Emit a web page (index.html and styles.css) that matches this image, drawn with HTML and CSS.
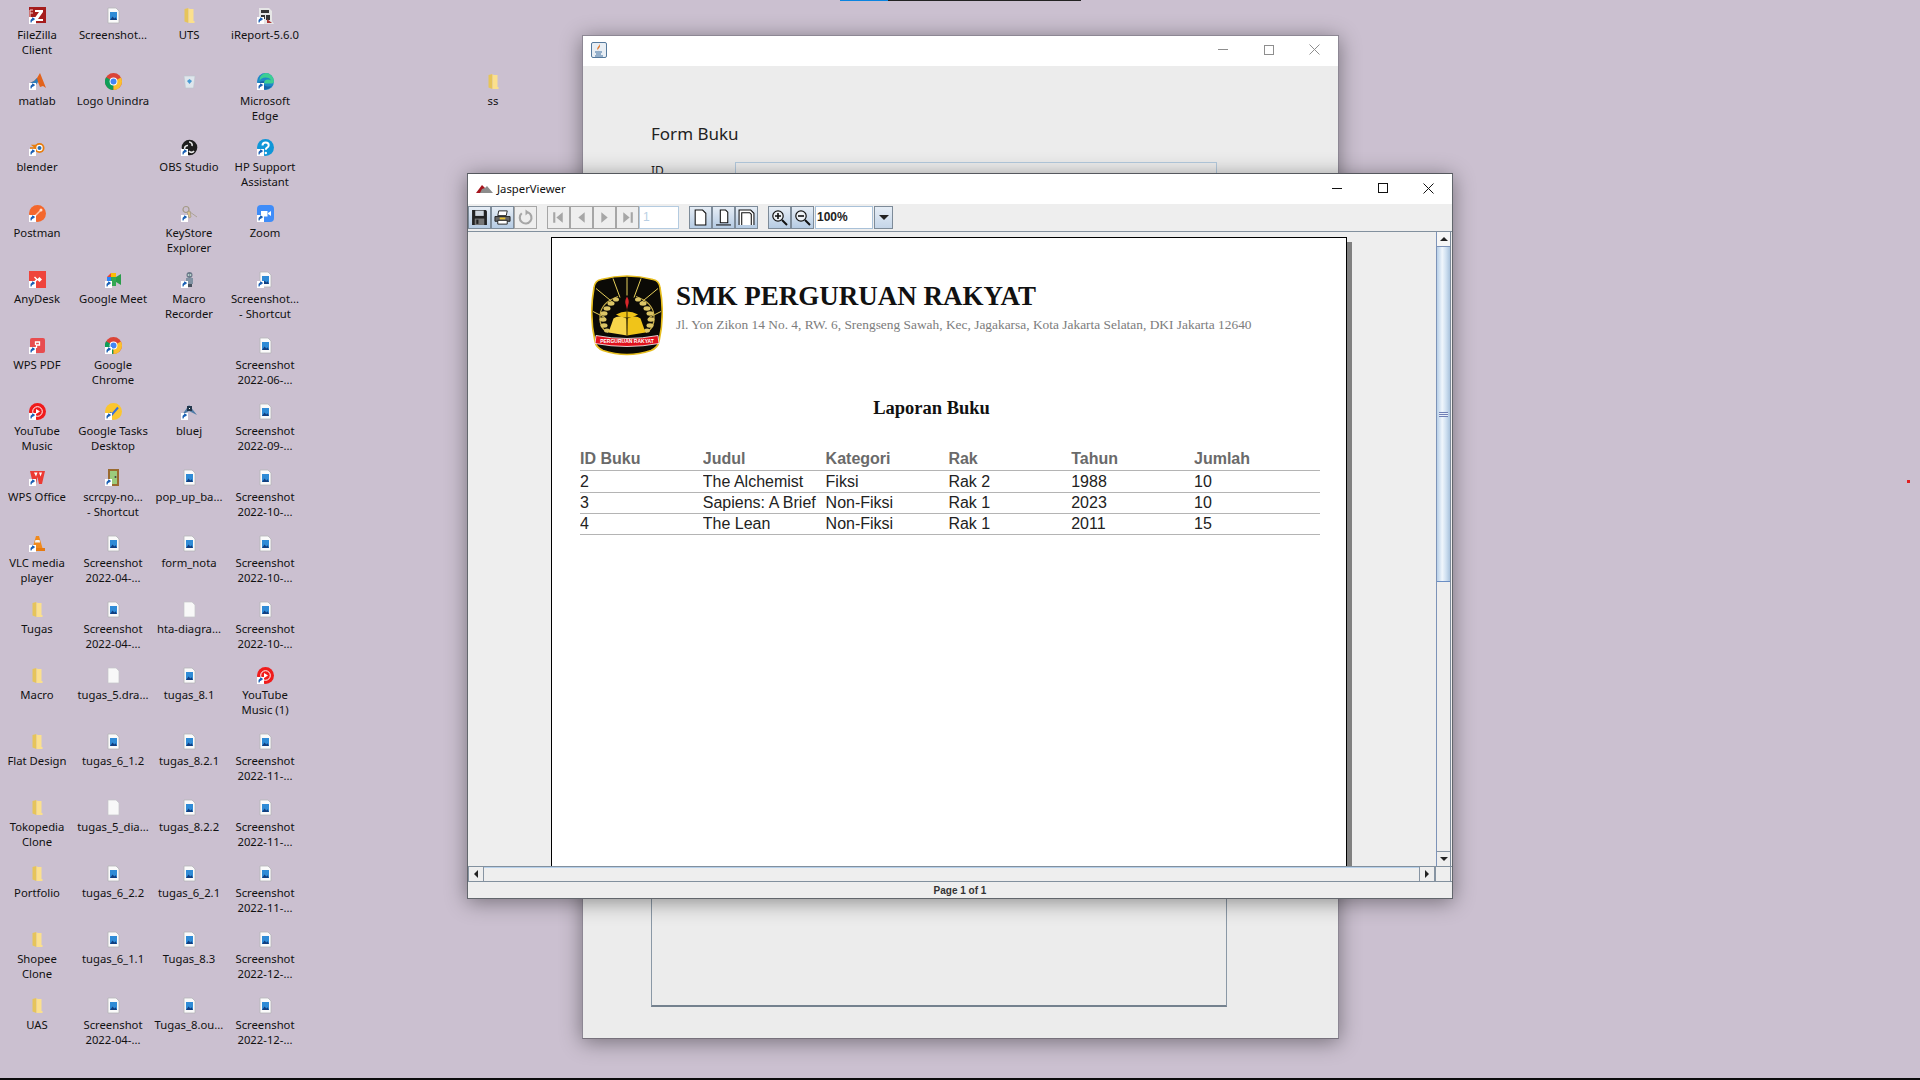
FILE: index.html
```html
<!DOCTYPE html>
<html lang="id">
<head>
<meta charset="utf-8">
<title>JasperViewer</title>
<link rel="stylesheet" href="styles.css">
</head>
<body>
<svg class="defs" width="0" height="0" aria-hidden="true">
  <defs>
    <symbol id="sc" viewBox="0 0 17 17"><rect x="0" y="10" width="7" height="7" fill="#fff"/><path d="M2 15.5v-2.2q0-1.2 1.3-1.2h1.2M3.6 10.8l1.9 1.3-1.9 1.3z" fill="#1a5fb4" stroke="#1a5fb4" stroke-width="1"/></symbol>
    <symbol id="doc" viewBox="0 0 17 17"><path d="M3 1h8l3 3v12H3z" fill="#fafafa" stroke="#b5b5b8" stroke-width=".8"/><rect x="5" y="5" width="7" height="8" fill="#2f8bd6"/><path d="M5 13l2.6-3.6 1.7 2 1.3-1.2L12 13z" fill="#123f80"/></symbol>
    <symbol id="blank" viewBox="0 0 17 17"><path d="M3 1h8l3 3v12H3z" fill="#f8f8f8" stroke="#c4c4c8" stroke-width=".7"/></symbol>
    <symbol id="folder" viewBox="0 0 17 17"><path d="M3.5 2l4-1v15l-4-1.5z" fill="#e6c45a"/><path d="M7.5 1l1 1h4v12h1v2h-6z" fill="#fbe08d"/></symbol>
    <symbol id="fz" viewBox="0 0 17 17"><rect width="17" height="16" fill="#a51c1c"/><path d="M6 3h8v2l-5 7h5v2H5v-2l5-7H6z" fill="#fff"/><path d="M1 3h3M1 6h3M1 3v8" stroke="#f6d0d0" fill="none"/></symbol>
    <symbol id="irep" viewBox="0 0 17 17"><path d="M2 1h10l3 3v10l2 3H2z" fill="#e6e6e6"/><path d="M4 3h8v3H4zM4 8h4v4H4zM9 8h4v5H9z" fill="#333"/><path d="M10 12l5 4h-5z" fill="#a33"/></symbol>
    <symbol id="matlab" viewBox="0 0 17 17"><path d="M1 10l4-2 3-3 3-5 6 15-3-2-3 1-2-5z" fill="#e2621b"/><path d="M1 10l4-2 3-3 1 4-3 4z" fill="#2e7dbc"/></symbol>
    <symbol id="chrome" viewBox="0 0 17 17"><circle cx="8.5" cy="8.5" r="8.5" fill="#db4437"/><path d="M8.5 8.5L1.1 4.2A8.5 8.5 0 0 0 8.5 17z" fill="#0f9d58"/><path d="M8.5 8.5V17A8.5 8.5 0 0 0 16 4.5z" fill="#fbc02d"/><circle cx="8.5" cy="8.5" r="3.9" fill="#fff"/><circle cx="8.5" cy="8.5" r="3" fill="#4285f4"/></symbol>
    <symbol id="bin" viewBox="0 0 17 17"><path d="M3 3h11l-1.5 12h-8z" fill="#dfe6ec" stroke="#bcc6cf" stroke-width=".6"/><path d="M6 8l2.500-2 2.500 2-2.500 3z" fill="#4a9bd4"/></symbol>
    <symbol id="edge" viewBox="0 0 17 17"><circle cx="8.500" cy="8.500" r="8.500" fill="#1e88c7"/><path d="M8.500 0A8.500 8.500 0 0 1 17 8.500q0 2-3.500 2H7q0-4 4-4 2 0 3 1-1-3-5.500-3Q4 4.500 2.500 8 2 2 8.500 0z" fill="#3ccf92"/><path d="M7 10.500q0 3.500 5 3 2 0 3-1A8.500 8.500 0 0 1 5 16q-3-2-3-6 1-2 5-2z" fill="#1565a8"/></symbol>
    <symbol id="blender" viewBox="0 0 17 17"><path d="M1 9h6L4 6.500h5L11 4.500" fill="none" stroke="#e87d0d" stroke-width="1.600"/><circle cx="10.500" cy="9" r="5" fill="#e87d0d"/><circle cx="10.500" cy="9" r="3.200" fill="#fff"/><circle cx="10.500" cy="9" r="2" fill="#2a6fb0"/></symbol>
    <symbol id="obs" viewBox="0 0 17 17"><circle cx="8.500" cy="8.500" r="7.800" fill="#1e1e1e"/><path d="M8 3a3 3 0 0 1 3 4M4 11a3 3 0 0 1 3-4.500M13 12a3 3 0 0 1-5 0" stroke="#e8e8e8" stroke-width="1.600" fill="none"/></symbol>
    <symbol id="hp" viewBox="0 0 17 17"><circle cx="8.500" cy="8.500" r="8.500" fill="#0f96d8"/><path d="M5.500 6.500q0-3 3.200-3 3 0 3 2.700 0 1.500-1.600 2.500-1.300.8-1.300 2" fill="none" stroke="#fff" stroke-width="2"/><circle cx="8.800" cy="14" r="1.200" fill="#fff"/></symbol>
    <symbol id="postman" viewBox="0 0 17 17"><circle cx="8.500" cy="8.500" r="8.500" fill="#f4672c"/><path d="M5 12l7-7" stroke="#ffc9ad" stroke-width="1.400"/><circle cx="12" cy="5" r="1.500" fill="#ffe0d0"/></symbol>
    <symbol id="keys" viewBox="0 0 17 17"><circle cx="5" cy="4.500" r="3" fill="none" stroke="#a49a86" stroke-width="1.200"/><path d="M6 7l2 6 2-1-1-6zM9 7l7 5" fill="#dcc38c" stroke="#a49a86" stroke-width=".8"/></symbol>
    <symbol id="zoom" viewBox="0 0 17 17"><rect width="17" height="17" rx="4" fill="#3f8cf8"/><path d="M4 6h6.500v5.500H4zM11 8l3-2v5l-3-2z" fill="#fff"/></symbol>
    <symbol id="anydesk" viewBox="0 0 17 17"><rect width="17" height="17" fill="#ef443b"/><path d="M6 5.500L9 8.500 6 11.500 5 10.500 7 8.500 5 6.500zM10.500 6l2.500 2.500-2.500 2.500L8 8.500z" fill="#fff"/></symbol>
    <symbol id="meet" viewBox="0 0 17 17"><path d="M2 6l4-4v4z" fill="#ea4335"/><path d="M6 2h5v4H6z" fill="#fbbc04"/><path d="M2 6h4v5H2z" fill="#2684fc"/><path d="M2 11h4v4H3.500L2 13.500z" fill="#0066da"/><path d="M6 6h5v9H6z" fill="#34a853"/><path d="M11 6l5-3v11l-5-3z" fill="#2a9d4a"/></symbol>
    <symbol id="macro" viewBox="0 0 17 17"><circle cx="8.500" cy="4" r="3" fill="#6c7a8a"/><rect x="5" y="7" width="7" height="6" fill="#8192a3"/><rect x="6" y="13" width="5" height="3" fill="#47525e"/><circle cx="7.500" cy="4" r=".8" fill="#dfe"/><circle cx="9.500" cy="4" r=".8" fill="#dfe"/></symbol>
    <symbol id="wpspdf" viewBox="0 0 17 17"><rect x="1" y="1" width="15" height="15" rx="2" fill="#e84c4f"/><path d="M6.500 8V5h4v3h-3v3" fill="none" stroke="#fff" stroke-width="1.300"/></symbol>
    <symbol id="ytm" viewBox="0 0 17 17"><circle cx="8.500" cy="8.500" r="8.500" fill="#f01b1b"/><circle cx="8.500" cy="8.500" r="4.800" fill="none" stroke="#fff" stroke-width="1"/><path d="M7 6l4 2.500-4 2.500z" fill="#fff"/></symbol>
    <symbol id="tasks" viewBox="0 0 17 17"><circle cx="8.500" cy="8.500" r="8.500" fill="#fbc62e"/><path d="M5 9.500l2 2 6-7" fill="none" stroke="#3a6fd8" stroke-width="2"/></symbol>
    <symbol id="bluej" viewBox="0 0 17 17"><path d="M1 12l7-10 8 10-8-4z" fill="#4e7aa5"/><path d="M6 3h5v5H6z" fill="#24384c"/><path d="M8 5l1 1" stroke="#fff"/></symbol>
    <symbol id="wps" viewBox="0 0 17 17"><path d="M1 2h15l-3 13h-3L8.500 8 7 15H4z" fill="#ec3a33"/><path d="M5 3.500l2 4 1.500-4zM10 3.500l1.500 4 1.500-4z" fill="#fff"/></symbol>
    <symbol id="scrcpy" viewBox="0 0 17 17"><rect x="3" y="0" width="11" height="17" fill="#9a6a2e"/><rect x="5" y="2" width="7" height="13" fill="#9ccb7c"/><circle cx="10.500" cy="8" r="1" fill="#444"/></symbol>
    <symbol id="vlc" viewBox="0 0 17 17"><path d="M7 1h3l3.500 12h-10z" fill="#f08a1d"/><path d="M6.500 5h4l.6 2.500H5.800z" fill="#f4f4f4"/><rect x="1" y="13" width="15" height="3" fill="#e67a10"/></symbol>
  </defs>
</svg>

<div class="topbar"><span class="topbar-blue"></span></div>
<span class="red-dot"></span>

<main class="desktop">
  <div class="it"><svg class="ic" viewBox="0 0 17 17"><use href="#fz"/><use href="#sc"/></svg><span>FileZilla<br>Client</span></div>
  <div class="it"><svg class="ic" viewBox="0 0 17 17"><use href="#matlab"/><use href="#sc"/></svg><span>matlab</span></div>
  <div class="it"><svg class="ic" viewBox="0 0 17 17"><use href="#blender"/><use href="#sc"/></svg><span>blender</span></div>
  <div class="it"><svg class="ic" viewBox="0 0 17 17"><use href="#postman"/><use href="#sc"/></svg><span>Postman</span></div>
  <div class="it"><svg class="ic" viewBox="0 0 17 17"><use href="#anydesk"/><use href="#sc"/></svg><span>AnyDesk</span></div>
  <div class="it"><svg class="ic" viewBox="0 0 17 17"><use href="#wpspdf"/><use href="#sc"/></svg><span>WPS PDF</span></div>
  <div class="it"><svg class="ic" viewBox="0 0 17 17"><use href="#ytm"/><use href="#sc"/></svg><span>YouTube<br>Music</span></div>
  <div class="it"><svg class="ic" viewBox="0 0 17 17"><use href="#wps"/><use href="#sc"/></svg><span>WPS Office</span></div>
  <div class="it"><svg class="ic" viewBox="0 0 17 17"><use href="#vlc"/><use href="#sc"/></svg><span>VLC media<br>player</span></div>
  <div class="it"><svg class="ic" viewBox="0 0 17 17"><use href="#folder"/></svg><span>Tugas</span></div>
  <div class="it"><svg class="ic" viewBox="0 0 17 17"><use href="#folder"/></svg><span>Macro</span></div>
  <div class="it"><svg class="ic" viewBox="0 0 17 17"><use href="#folder"/></svg><span>Flat Design</span></div>
  <div class="it"><svg class="ic" viewBox="0 0 17 17"><use href="#folder"/></svg><span>Tokopedia<br>Clone</span></div>
  <div class="it"><svg class="ic" viewBox="0 0 17 17"><use href="#folder"/></svg><span>Portfolio</span></div>
  <div class="it"><svg class="ic" viewBox="0 0 17 17"><use href="#folder"/></svg><span>Shopee<br>Clone</span></div>
  <div class="it"><svg class="ic" viewBox="0 0 17 17"><use href="#folder"/></svg><span>UAS</span></div>

  <div class="it"><svg class="ic" viewBox="0 0 17 17"><use href="#doc"/></svg><span>Screenshot...</span></div>
  <div class="it"><svg class="ic" viewBox="0 0 17 17"><use href="#chrome"/></svg><span>Logo Unindra</span></div>
  <div class="it"></div>
  <div class="it"></div>
  <div class="it"><svg class="ic" viewBox="0 0 17 17"><use href="#meet"/><use href="#sc"/></svg><span>Google Meet</span></div>
  <div class="it"><svg class="ic" viewBox="0 0 17 17"><use href="#chrome"/><use href="#sc"/></svg><span>Google<br>Chrome</span></div>
  <div class="it"><svg class="ic" viewBox="0 0 17 17"><use href="#tasks"/><use href="#sc"/></svg><span>Google Tasks<br>Desktop</span></div>
  <div class="it"><svg class="ic" viewBox="0 0 17 17"><use href="#scrcpy"/><use href="#sc"/></svg><span>scrcpy-no...<br>- Shortcut</span></div>
  <div class="it"><svg class="ic" viewBox="0 0 17 17"><use href="#doc"/></svg><span>Screenshot<br>2022-04-...</span></div>
  <div class="it"><svg class="ic" viewBox="0 0 17 17"><use href="#doc"/></svg><span>Screenshot<br>2022-04-...</span></div>
  <div class="it"><svg class="ic" viewBox="0 0 17 17"><use href="#blank"/></svg><span>tugas_5.dra...</span></div>
  <div class="it"><svg class="ic" viewBox="0 0 17 17"><use href="#doc"/></svg><span>tugas_6_1.2</span></div>
  <div class="it"><svg class="ic" viewBox="0 0 17 17"><use href="#blank"/></svg><span>tugas_5_dia...</span></div>
  <div class="it"><svg class="ic" viewBox="0 0 17 17"><use href="#doc"/></svg><span>tugas_6_2.2</span></div>
  <div class="it"><svg class="ic" viewBox="0 0 17 17"><use href="#doc"/></svg><span>tugas_6_1.1</span></div>
  <div class="it"><svg class="ic" viewBox="0 0 17 17"><use href="#doc"/></svg><span>Screenshot<br>2022-04-...</span></div>

  <div class="it"><svg class="ic" viewBox="0 0 17 17"><use href="#folder"/></svg><span>UTS</span></div>
  <div class="it"><svg class="ic" viewBox="0 0 17 17"><use href="#bin"/></svg></div>
  <div class="it"><svg class="ic" viewBox="0 0 17 17"><use href="#obs"/><use href="#sc"/></svg><span>OBS Studio</span></div>
  <div class="it"><svg class="ic" viewBox="0 0 17 17"><use href="#keys"/><use href="#sc"/></svg><span>KeyStore<br>Explorer</span></div>
  <div class="it"><svg class="ic" viewBox="0 0 17 17"><use href="#macro"/><use href="#sc"/></svg><span>Macro<br>Recorder</span></div>
  <div class="it"></div>
  <div class="it"><svg class="ic" viewBox="0 0 17 17"><use href="#bluej"/><use href="#sc"/></svg><span>bluej</span></div>
  <div class="it"><svg class="ic" viewBox="0 0 17 17"><use href="#doc"/></svg><span>pop_up_ba...</span></div>
  <div class="it"><svg class="ic" viewBox="0 0 17 17"><use href="#doc"/></svg><span>form_nota</span></div>
  <div class="it"><svg class="ic" viewBox="0 0 17 17"><use href="#blank"/></svg><span>hta-diagra...</span></div>
  <div class="it"><svg class="ic" viewBox="0 0 17 17"><use href="#doc"/></svg><span>tugas_8.1</span></div>
  <div class="it"><svg class="ic" viewBox="0 0 17 17"><use href="#doc"/></svg><span>tugas_8.2.1</span></div>
  <div class="it"><svg class="ic" viewBox="0 0 17 17"><use href="#doc"/></svg><span>tugas_8.2.2</span></div>
  <div class="it"><svg class="ic" viewBox="0 0 17 17"><use href="#doc"/></svg><span>tugas_6_2.1</span></div>
  <div class="it"><svg class="ic" viewBox="0 0 17 17"><use href="#doc"/></svg><span>Tugas_8.3</span></div>
  <div class="it"><svg class="ic" viewBox="0 0 17 17"><use href="#doc"/></svg><span>Tugas_8.ou...</span></div>

  <div class="it"><svg class="ic" viewBox="0 0 17 17"><use href="#irep"/><use href="#sc"/></svg><span>iReport-5.6.0</span></div>
  <div class="it"><svg class="ic" viewBox="0 0 17 17"><use href="#edge"/><use href="#sc"/></svg><span>Microsoft<br>Edge</span></div>
  <div class="it"><svg class="ic" viewBox="0 0 17 17"><use href="#hp"/><use href="#sc"/></svg><span>HP Support<br>Assistant</span></div>
  <div class="it"><svg class="ic" viewBox="0 0 17 17"><use href="#zoom"/><use href="#sc"/></svg><span>Zoom</span></div>
  <div class="it"><svg class="ic" viewBox="0 0 17 17"><use href="#doc"/><use href="#sc"/></svg><span>Screenshot...<br>- Shortcut</span></div>
  <div class="it"><svg class="ic" viewBox="0 0 17 17"><use href="#doc"/></svg><span>Screenshot<br>2022-06-...</span></div>
  <div class="it"><svg class="ic" viewBox="0 0 17 17"><use href="#doc"/></svg><span>Screenshot<br>2022-09-...</span></div>
  <div class="it"><svg class="ic" viewBox="0 0 17 17"><use href="#doc"/></svg><span>Screenshot<br>2022-10-...</span></div>
  <div class="it"><svg class="ic" viewBox="0 0 17 17"><use href="#doc"/></svg><span>Screenshot<br>2022-10-...</span></div>
  <div class="it"><svg class="ic" viewBox="0 0 17 17"><use href="#doc"/></svg><span>Screenshot<br>2022-10-...</span></div>
  <div class="it"><svg class="ic" viewBox="0 0 17 17"><use href="#ytm"/><use href="#sc"/></svg><span>YouTube<br>Music (1)</span></div>
  <div class="it"><svg class="ic" viewBox="0 0 17 17"><use href="#doc"/></svg><span>Screenshot<br>2022-11-...</span></div>
  <div class="it"><svg class="ic" viewBox="0 0 17 17"><use href="#doc"/></svg><span>Screenshot<br>2022-11-...</span></div>
  <div class="it"><svg class="ic" viewBox="0 0 17 17"><use href="#doc"/></svg><span>Screenshot<br>2022-11-...</span></div>
  <div class="it"><svg class="ic" viewBox="0 0 17 17"><use href="#doc"/></svg><span>Screenshot<br>2022-12-...</span></div>
  <div class="it"><svg class="ic" viewBox="0 0 17 17"><use href="#doc"/></svg><span>Screenshot<br>2022-12-...</span></div>

  <div class="it it-ss"><svg class="ic" viewBox="0 0 17 17"><use href="#folder"/></svg><span>ss</span></div>
</main>

<section class="win form-win">
  <header class="titlebar titlebar-f">
    <svg class="java" viewBox="0 0 16 16"><rect x=".5" y=".5" width="15" height="15" rx="1.500" fill="#e8eef4" stroke="#55799c"/><path d="M8 2q2 2 0 4t0 3q-3-2-1-4t1-3z" fill="#e0762a"/><path d="M4 10h7M5 12h5M4 14h8" stroke="#3f6f9f"/></svg>
    <div class="controls controls-dim">
      <span class="ctl"><i class="c-min"></i></span>
      <span class="ctl"><i class="c-max"></i></span>
      <span class="ctl"><svg viewBox="0 0 11 11"><path d="M.5.500l10 10M10.500.500l-10 10" stroke="currentColor" fill="none"/></svg></span>
    </div>
  </header>
  <div class="form-body">
    <h2 class="form-title">Form Buku</h2>
    <div class="form-row"><label class="form-label">ID</label><div class="form-input"></div></div>
    <div class="form-list"></div>
  </div>
</section>

<section class="win viewer">
  <header class="titlebar titlebar-v">
    <svg class="jasper" viewBox="0 0 17 9"><path d="M0 9l6-8 3 3 2 5z" fill="#a5141c"/><path d="M6 5l3-1 2-2 6 7H4z" fill="#8c8c8c"/></svg>
    <span class="win-title">JasperViewer</span>
    <div class="controls">
      <span class="ctl"><i class="c-min"></i></span>
      <span class="ctl"><i class="c-max"></i></span>
      <span class="ctl"><svg viewBox="0 0 11 11"><path d="M.5.500l10 10M10.500.500l-10 10" stroke="currentColor" fill="none"/></svg></span>
    </div>
  </header>

  <div class="toolbar">
    <div class="tgroup">
      <button class="tb"><svg viewBox="0 0 16 16"><path d="M1 1h13l1 1v13H1z" fill="#222"/><rect x="4" y="1.500" width="8" height="5" fill="#cfd6de"/><rect x="3.500" y="9" width="9" height="6" fill="#777"/><rect x="5" y="10" width="2" height="4" fill="#222"/></svg></button>
      <button class="tb"><svg viewBox="0 0 18 16"><path d="M5 1h9l-1 5H4z" fill="#fff" stroke="#222"/><path d="M1 7h16v5H1z" fill="#666" stroke="#222"/><path d="M4 11h10v4H4z" fill="#fff" stroke="#222"/><rect x="6" y="8" width="6" height="2" fill="#e9c12d"/></svg></button>
      <button class="tb tb-off"><svg viewBox="0 0 16 16"><path d="M10.500 3.200A5.500 5.500 0 1 1 4.500 4" fill="none" stroke="#a6a6a6" stroke-width="2"/><path d="M8 .5v5.500l3.500-3z" fill="#a6a6a6"/></svg></button>
    </div>
    <div class="tgroup tgroup-nav">
      <button class="tb tb-off"><svg viewBox="0 0 16 16"><path d="M3 3h2v10H3zM12 3v10L6 8z" fill="#a6a6a6"/></svg></button>
      <button class="tb tb-off"><svg viewBox="0 0 16 16"><path d="M11 3v10L5 8z" fill="#a6a6a6"/></svg></button>
      <button class="tb tb-off"><svg viewBox="0 0 16 16"><path d="M5 3v10l6-5z" fill="#a6a6a6"/></svg></button>
      <button class="tb tb-off"><svg viewBox="0 0 16 16"><path d="M11 3h2v10h-2zM4 3v10l6-5z" fill="#a6a6a6"/></svg></button>
      <div class="page-input">1</div>
    </div>
    <div class="tgroup tgroup-fit">
      <button class="tb"><svg viewBox="0 0 16 16"><path d="M3 1h7l3 3v11H3z" fill="#fff" stroke="#111"/></svg></button>
      <button class="tb"><svg viewBox="0 0 16 16"><path d="M5 1h5l2 2v10H5z" fill="#fff" stroke="#111"/><path d="M1 15h14" stroke="#111"/></svg></button>
      <button class="tb"><svg viewBox="0 0 16 16"><path d="M1 15V1h11l3 3v11" fill="#fff" stroke="#111"/><path d="M3.500 15V3.500h7.500l1.500 1.500v10" fill="none" stroke="#111"/></svg></button>
    </div>
    <div class="tgroup tgroup-zoom">
      <button class="tb"><svg viewBox="0 0 17 17"><circle cx="7" cy="7" r="5.200" fill="#eef2f6" stroke="#111" stroke-width="1.200"/><path d="M4 7h6M7 4v6" stroke="#111" stroke-width="1.600"/><path d="M11 11l5 5" stroke="#111" stroke-width="2"/></svg></button>
      <button class="tb"><svg viewBox="0 0 17 17"><circle cx="7" cy="7" r="5.200" fill="#eef2f6" stroke="#111" stroke-width="1.200"/><path d="M4 7h6" stroke="#111" stroke-width="1.600"/><path d="M11 11l5 5" stroke="#111" stroke-width="2"/></svg></button>
      <div class="zoom-input">100%</div>
      <button class="tb tb-drop"><i class="tri-down"></i></button>
    </div>
  </div>

  <div class="work">
    <div class="viewport">
      <article class="page">
        <div class="report-head">
          <svg class="logo" viewBox="0 0 72 82">
            <path d="M10 4q26-7 52 0 6 1 7 8 5 28-1 54-1 6-8 9-24 8-48 0-7-3-8-9Q-2 40 3 12q1-7 7-8z" fill="#0b0a06" stroke="#e6bd1e" stroke-width="1.600"/>
            <path d="M36 20V2M29 22L22 3M43 22L50 3M22 27L5 13M50 27L67 13M14 42L2 36M58 42L70 36" stroke="#e6cf5a" stroke-width="1"/>
            <path d="M27 21Q10 27 9 40T17 57M45 21Q62 27 63 40T55 57" fill="none" stroke="#c9b04a" stroke-width="1.200"/>
            <g fill="#dcc566">
              <ellipse cx="25" cy="24" rx="3" ry="2"/><ellipse cx="20" cy="28" rx="3.500" ry="2.200"/><ellipse cx="16" cy="33" rx="3.500" ry="2.200"/><ellipse cx="13" cy="38" rx="3.500" ry="2.200"/><ellipse cx="12" cy="44" rx="3.500" ry="2.200"/><ellipse cx="13" cy="50" rx="3.500" ry="2.200"/><ellipse cx="16" cy="55" rx="3" ry="2"/>
              <ellipse cx="47" cy="24" rx="3" ry="2"/><ellipse cx="52" cy="28" rx="3.500" ry="2.200"/><ellipse cx="56" cy="33" rx="3.500" ry="2.200"/><ellipse cx="59" cy="38" rx="3.500" ry="2.200"/><ellipse cx="60" cy="44" rx="3.500" ry="2.200"/><ellipse cx="59" cy="50" rx="3.500" ry="2.200"/><ellipse cx="56" cy="55" rx="3" ry="2"/>
            </g>
            <path d="M36 21q3 5 1 9l-1 4-1-4q-2-4 1-9z" fill="#d8262a"/>
            <path d="M25 39q11-6 22 0l-6 3h-10z" fill="#f0c419"/>
            <path d="M35.500 43q-8-4-13 0l-5 14 18.500 3z" fill="#f7d54a"/>
            <path d="M36.500 43q8-4 13 0l5 14-18.500 3z" fill="#f0c419"/>
            <path d="M36 34v26" stroke="#3a2c00"/>
            <path d="M5 60q31 6 62 0l1 8q-32 6-64 0z" fill="#e0121c" stroke="#fff" stroke-width=".8"/>
            <text class="logo-text" x="36" y="67.500" text-anchor="middle">PERGURUAN RAKYAT</text>
          </svg>
          <div class="report-titles">
            <h1 class="school">SMK PERGURUAN RAKYAT</h1>
            <p class="address">Jl. Yon Zikon 14 No. 4, RW. 6, Srengseng Sawah, Kec, Jagakarsa, Kota Jakarta Selatan, DKI Jakarta 12640</p>
          </div>
        </div>
        <h2 class="report-title">Laporan Buku</h2>
        <div class="rtable">
          <div class="rrow rhead"><span>ID Buku</span><span>Judul</span><span>Kategori</span><span>Rak</span><span>Tahun</span><span>Jumlah</span></div>
          <div class="rrow"><span>2</span><span>The Alchemist</span><span>Fiksi</span><span>Rak 2</span><span>1988</span><span>10</span></div>
          <div class="rrow"><span>3</span><span>Sapiens: A Brief</span><span>Non-Fiksi</span><span>Rak 1</span><span>2023</span><span>10</span></div>
          <div class="rrow"><span>4</span><span>The Lean</span><span>Non-Fiksi</span><span>Rak 1</span><span>2011</span><span>15</span></div>
        </div>
      </article>
    </div>
    <div class="vscroll">
      <span class="sbtn sbtn-v"><i class="tri-up"></i></span>
      <div class="vthumb"><span class="grip"></span></div>
      <div class="vtrack"></div>
      <span class="sbtn sbtn-v"><i class="tri-down tri-small"></i></span>
    </div>
  </div>

  <div class="hscroll">
    <span class="sbtn sbtn-h"><i class="tri-left"></i></span>
    <div class="htrack"></div>
    <span class="sbtn sbtn-h"><i class="tri-right"></i></span>
    <span class="corner"></span>
  </div>
  <footer class="status">Page 1 of 1</footer>
</section>

<div class="bottombar"></div>
</body>
</html>
```

FILE: styles.css
```css
* { box-sizing: border-box; }
html, body { margin: 0; padding: 0; }
body {
  width: 1920px;
  height: 1080px;
  overflow: hidden;
  position: relative;
  background: #cbc0d0;
  font-family: "Noto Sans", "Open Sans", sans-serif;
  color: #111;
}
.defs { position: absolute; }

.topbar { position: absolute; left: 840px; top: 0; width: 241px; height: 1px; background: #222; }
.topbar-blue { display: block; width: 48px; height: 1px; background: #0a84e0; }
.red-dot { position: absolute; left: 1907px; top: 480px; width: 3px; height: 3px; background: #e02020; }
.bottombar { position: absolute; left: 0; right: 0; bottom: 0; height: 2px; background: #0c0c0c; }

/* desktop icons */
.desktop {
  display: grid;
  grid-auto-flow: column;
  grid-template-columns: repeat(7, 74px);
  grid-template-rows: repeat(16, 66px);
  column-gap: 2px;
  padding-top: 7px;
}
.it {
  display: flex;
  flex-direction: column;
  align-items: center;
  font-size: 11.3px;
  line-height: 15px;
  text-align: center;
  white-space: nowrap;
}
.it span { margin-top: 3px; }
.it-ss { grid-column: 7; grid-row: 2; }
.ic { width: 17px; height: 17px; display: block; flex: none; overflow: visible; }

/* windows */
.win {
  position: absolute;
  display: flex;
  flex-direction: column;
  background: #eeeeee;
  box-shadow: 0 3px 20px rgba(0, 0, 0, .42);
}
.form-win { left: 582px; top: 35px; width: 757px; height: 1004px; border: 1px solid #8d8794; border-bottom-color: #77717c; }
.viewer { left: 467px; top: 173px; width: 986px; height: 726px; border: 1px solid #62666c; border-top-color: #55585e; }

.titlebar { display: flex; align-items: center; height: 30px; background: #fff; flex: none; padding: 0 0 2px 8px; }
.titlebar-f { padding-bottom: 3px; padding-right: 1px; }
.titlebar-v { padding-right: 1px; }
.java { width: 16px; height: 16px; }
.jasper { width: 17px; height: 9px; }
.win-title { margin-left: 4px; font-size: 11.3px; color: #111; }
.controls { margin-left: auto; display: flex; color: #111; }
.controls-dim { color: #8e8e8e; }
.ctl { width: 45.500px; height: 27px; display: flex; align-items: center; justify-content: center; }
.ctl svg { width: 11px; height: 11px; display: block; }
.c-min { display: block; width: 10px; height: 1px; background: currentColor; }
.c-max { display: block; width: 10px; height: 10px; border: 1px solid currentColor; }

/* background form */
.form-body { flex: 1; display: flex; flex-direction: column; background: #ececec; padding: 56px 0 31px 68px; }
.form-title { margin: 0; font-size: 17px; font-weight: 400; line-height: 24px; color: #222; }
.form-row { display: flex; margin-top: 16px; height: 30px; }
.form-label { width: 84px; font-size: 12px; line-height: 18px; color: #222; }
.form-input { width: 482px; border: 1px solid #b4cade; background: #eee; }
.form-list { flex: 1; width: 576px; margin-top: 16px; border: 1px solid #8a98a6; border-bottom: 2px solid #74818e; }

/* toolbar */
.toolbar { display: flex; align-items: center; height: 27px; flex: none; background: #eeeeee; }
.tgroup { display: flex; align-items: center; }
.tgroup-nav { margin-left: 10px; }
.tgroup-fit { margin-left: 10px; }
.tgroup-zoom { margin-left: 10px; }
.tb {
  width: 23px;
  height: 23px;
  padding: 0;
  margin: 0;
  display: flex;
  align-items: center;
  justify-content: center;
  border: 1px solid #7d8b99;
  background: linear-gradient(#e6edf5, #b5cbe3);
}
.tb svg { width: 17px; height: 17px; display: block; }
.tb-off { background: #eeeeee; border-color: #a6a6a6; }
.page-input { width: 40px; height: 23px; border: 1px solid #b4cbe0; background: #fff; color: #b8cfe4; font: 12px/21px "Liberation Sans", sans-serif; padding-left: 3px; }
.zoom-input { width: 58px; height: 23px; margin-left: 1px; border: 1px solid #a9c1d8; background: #fff; color: #222; font: 700 12px/21px "Liberation Sans", sans-serif; padding-left: 1px; }
.tb-drop { width: 19px; margin-left: 1px; background: linear-gradient(#e6edf5, #c5d6e9); }
.tri-down, .tri-up, .tri-left, .tri-right { display: block; width: 0; height: 0; }
.tri-down { border-left: 5px solid transparent; border-right: 5px solid transparent; border-top: 5px solid #222; }
.tri-small { border-left-width: 4px; border-right-width: 4px; border-top-width: 4px; }
.tri-up { border-left: 4px solid transparent; border-right: 4px solid transparent; border-bottom: 4px solid #222; }
.tri-left { border-top: 4px solid transparent; border-bottom: 4px solid transparent; border-right: 4px solid #222; }
.tri-right { border-top: 4px solid transparent; border-bottom: 4px solid transparent; border-left: 4px solid #222; }

/* work area */
.work { flex: 1; display: flex; min-height: 0; border-top: 1px solid #82909e; border-bottom: 1px solid #82909e; }
.viewport { flex: 1; min-width: 0; overflow: hidden; background: #eeeeee; padding: 5px 0 0 83px; }
.page {
  width: 796px;
  height: 900px;
  background: #fff;
  border: 1px solid #000;
  box-shadow: 5px 5px 0 #808080;
  padding: 37px 0 0 28px;
}
.report-head { display: flex; align-items: flex-start; height: 82px; margin-left: 11px; }
.logo { width: 72px; height: 83px; flex: none; display: block; }
.logo-text { font: 700 5px "Liberation Sans", sans-serif; fill: #fff; }
.report-titles { margin-left: 13px; }
.school { margin: 7px 0 0; font: 700 27px/28px "Liberation Serif", serif; color: #111; white-space: nowrap; }
.address { margin: 7px 0 0; font: 400 13.400px/15px "Liberation Serif", serif; color: #7c7c7c; white-space: nowrap; }
.report-title { margin: 40px 0 0; width: 703px; font: 700 18.500px/22px "Liberation Serif", serif; text-align: center; color: #111; }
.rtable { margin-top: 30px; width: 740px; }
.rrow {
  display: grid;
  grid-template-columns: repeat(6, 122.800px);
  height: 21px;
  font: 400 16px/20px "Liberation Sans", sans-serif;
  color: #222;
  border-bottom: 1px solid #b4b4b4;
}
.rrow span { overflow: hidden; white-space: nowrap; }
.rhead { font-weight: 700; color: #6a6a6a; height: 22px; margin-bottom: 1px; }

/* scrollbars */
.vscroll { width: 15px; flex: none; margin-right: 1px; display: flex; flex-direction: column; border-left: 1px solid #7d93b8; border-right: 1px solid #7d8b99; background: #eeeeee; }
.sbtn { flex: none; display: flex; align-items: center; justify-content: center; background: #eeeeee; }
.sbtn-v { height: 15px; }
.vscroll .sbtn-v:first-child { background: #f6f6f6; border-bottom: 1px solid #7d93b8; }
.vscroll .sbtn-v:last-child { border-top: 1px solid #8794a2; }
.vthumb {
  height: 335px;
  flex: none;
  display: flex;
  align-items: center;
  justify-content: center;
  background: linear-gradient(90deg, #b7cfe8, #f0f6fc 40%, #cfe0f1 70%, #a9c2dc);
  border-bottom: 1px solid #6b8ec4;
}
.grip { display: block; width: 9px; height: 5px; background: repeating-linear-gradient(#6f7fb5 0 1px, #e8eef8 1px 2px); }
.vtrack { flex: 1; }

.hscroll { display: flex; height: 15px; flex: none; padding-right: 1px; background: #eeeeee; border-bottom: 1px solid #82909e; }
.sbtn-h { width: 16px; border-left: 1px solid #8794a2; border-right: 1px solid #8794a2; }
.htrack { flex: 1; border-top: 1px solid #b7d0ea; }
.corner { width: 16px; border-left: 1px solid #8794a2; border-right: 1px solid #8794a2; }

.status { flex: none; height: 16px; text-align: center; font: 700 10px/17px "Liberation Sans", sans-serif; color: #333; background: #eeeeee; }
```
